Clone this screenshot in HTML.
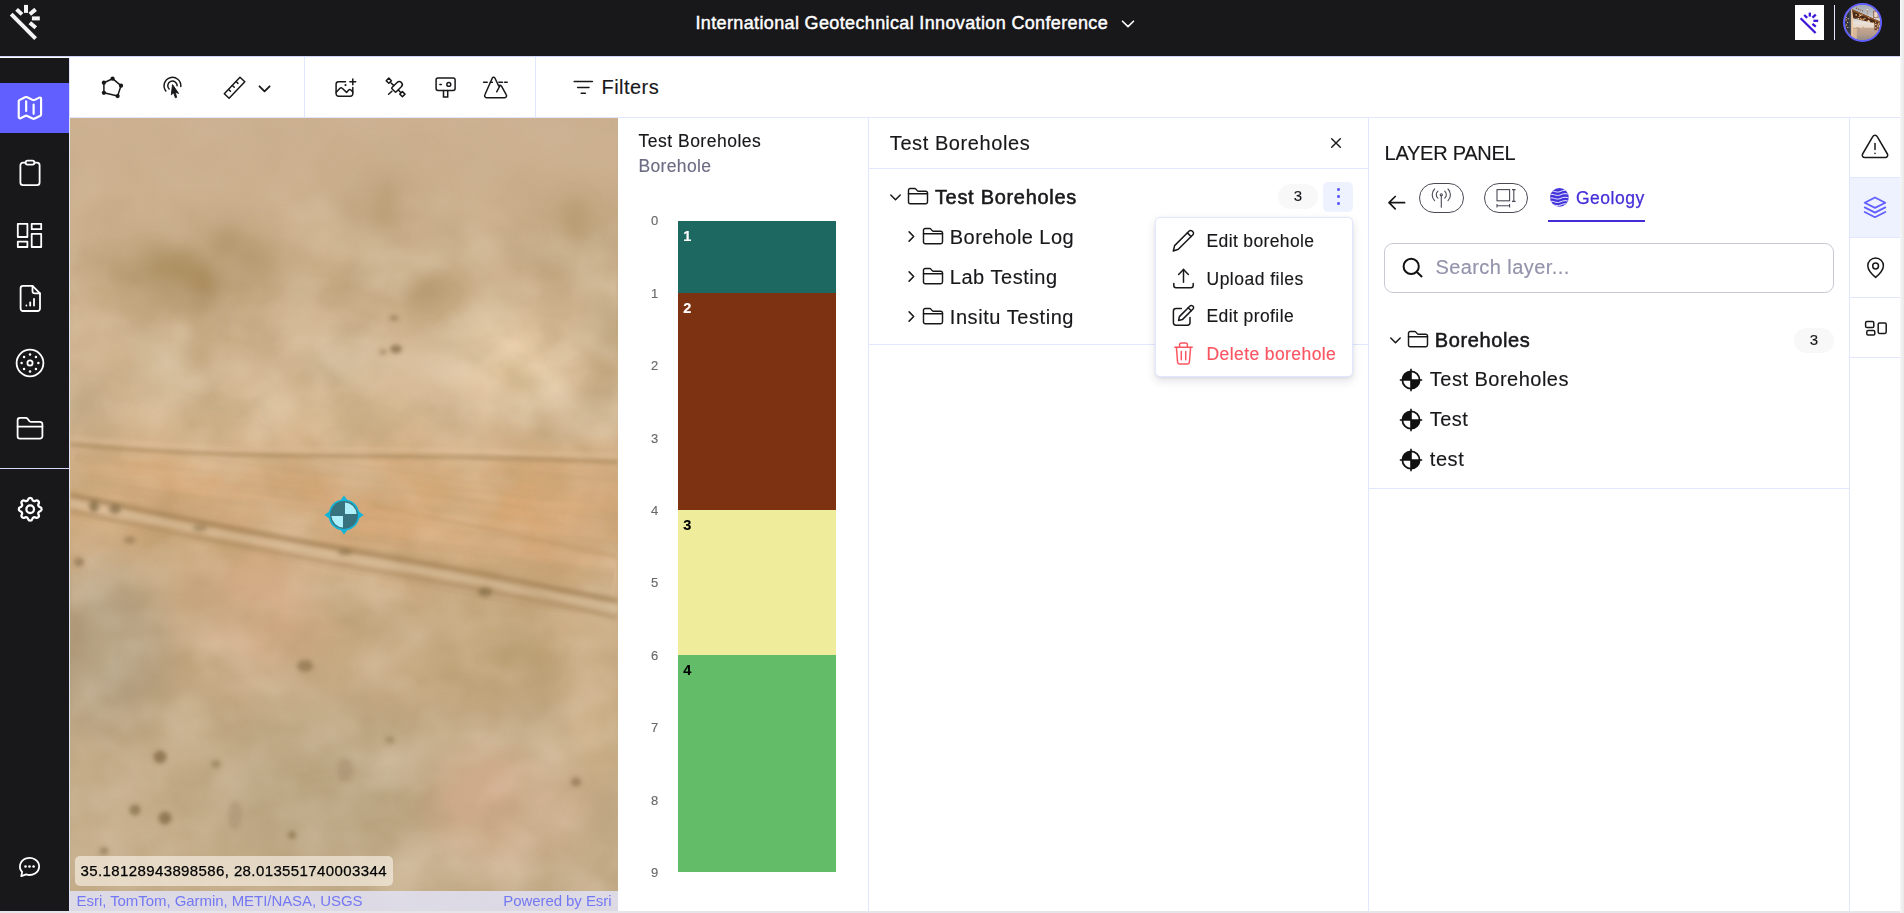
<!DOCTYPE html>
<html lang="en">
<head>
<meta charset="utf-8">
<title>International Geotechnical Innovation Conference</title>
<style>
*{box-sizing:border-box;margin:0;padding:0}
html,body{width:1904px;height:913px;overflow:hidden;background:#fff}
body{font-family:"Liberation Sans",Arial,sans-serif;color:#18181b;position:relative}
.abs{position:absolute}
svg{display:block;overflow:visible}
.ico{fill:none;stroke:#18181b;stroke-width:1.5;stroke-linecap:round;stroke-linejoin:round}
.icow{fill:none;stroke:#fff;stroke-width:1.8;stroke-linecap:round;stroke-linejoin:round}
.t{position:absolute;white-space:nowrap;line-height:1;-webkit-text-stroke:0.15px currentColor}
/* top bar */
#top{left:0;top:0;width:1900px;height:57px;background:#18181b;border-bottom:1px solid #cfd3fa}
#side{left:0;top:58px;width:70px;height:853px;background:#18181b;border-right:1px solid #dfe3fc}
#scroll{left:1900px;top:0;width:4px;height:913px;background:linear-gradient(90deg,#f6f6f6,#e9e9ea)}
#tool{left:0px;top:57px;width:1900px;height:61px;background:#fff;border-bottom:1px solid #e0e7ff}
.vsep{position:absolute;top:57px;width:1px;height:60px;background:#e0e7ff}
/* panels */
#strip{left:618px;top:118px;width:251px;height:793px;background:#fff;border-right:1px solid #e0e7ff}
#mid{left:869px;top:118px;width:500px;height:793px;background:#fff;border-right:1px solid #e0e7ff}
#right{left:1369px;top:118px;width:481px;height:793px;background:#fff;border-right:1px solid #e0e7ff}
#rail{left:1850px;top:118px;width:50px;height:793px;background:#fff}
#bottomline{left:0;top:911px;width:1900px;height:2px;background:#e6e6ea}
</style>
</head>
<body>
<!-- TOP BAR -->
<div id="top" class="abs"></div>
<div id="tool" class="abs"></div>
<div id="side" class="abs"></div>
<div class="vsep" style="left:304px"></div>
<div class="vsep" style="left:535px"></div>
<div id="scroll" class="abs"></div>


<!-- logo -->
<svg class="abs" style="left:0;top:0" width="69" height="57" viewBox="0 0 69 57">
 <g stroke="#f4f4f6" stroke-width="4" fill="none" stroke-linecap="butt">
  <line x1="11.2" y1="14.2" x2="35.6" y2="38.6"/>
  <line x1="26" y1="4.9" x2="26" y2="12.9"/>
  <line x1="31.9" y1="18.4" x2="39.8" y2="18.4"/>
  <line x1="29.8" y1="14.2" x2="35.6" y2="9.4"/>
  <line x1="16.6" y1="9.4" x2="22" y2="14.4"/>
  <line x1="29.8" y1="22.8" x2="35.8" y2="27.8"/>
 </g>
</svg>
<div class="t" id="title" style="left:695.5px;top:14.3px;font-size:18px;color:#fff;letter-spacing:0.36px;-webkit-text-stroke:0.45px #fff">International Geotechnical Innovation Conference</div>
<svg class="abs" style="left:1120px;top:17px" width="16" height="14" viewBox="0 0 16 14"><path d="M2.5 4.2 L8 9.6 L13.5 4.2" fill="none" stroke="#fff" stroke-width="1.6" stroke-linecap="round" stroke-linejoin="round"/></svg>
<!-- assistant button -->
<div class="abs" style="left:1795px;top:5px;width:29px;height:35px;background:#fff"></div>
<svg class="abs" style="left:1795px;top:5px" width="29" height="35" viewBox="0 0 29 35">
 <g stroke="#3d16d8" stroke-width="2.3" fill="none" stroke-linecap="butt">
  <line x1="5.6" y1="13.2" x2="20.6" y2="28"/>
  <line x1="14.8" y1="7.6" x2="14.8" y2="11.6"/>
  <line x1="18.4" y1="15.8" x2="23.2" y2="15.8"/>
  <line x1="17.4" y1="12.6" x2="20.8" y2="9.6"/>
  <line x1="9.2" y1="10" x2="12.2" y2="12.8"/>
  <line x1="17.4" y1="18.8" x2="20.8" y2="21.6"/>
 </g>
</svg>
<div class="abs" style="left:1834px;top:5px;width:1px;height:35px;background:#e4e6ff"></div>
<!-- avatar -->
<div class="abs" style="left:1842.8px;top:2.6px;width:39.6px;height:39.6px;border-radius:50%;border:2.1px solid #615fff;overflow:hidden;background:#c9a78a">
 <svg width="35.4" height="35.4" viewBox="0 0 35.4 35.4">
  <defs><linearGradient id="avg" x1="0" y1="0" x2="0" y2="1"><stop offset="0" stop-color="#a3a9b5"/><stop offset="0.3" stop-color="#c3c3c6"/><stop offset="0.5" stop-color="#e9e1d9"/><stop offset="0.63" stop-color="#ead9c6"/><stop offset="0.65" stop-color="#c6a892"/><stop offset="0.85" stop-color="#b39a8a"/><stop offset="1" stop-color="#8f8b86"/></linearGradient></defs>
  <rect width="35.4" height="35.4" fill="url(#avg)"/>
  <rect x="0" y="0" width="6.2" height="35.4" fill="#2e3340"/>
  <rect x="4.6" y="4" width="1.6" height="31" fill="#4a5060"/>
  <rect x="6.2" y="4.2" width="2" height="31.2" fill="#ecc9a0"/>
  <rect x="8.2" y="24" width="3.6" height="11.4" fill="#e2c09c" opacity="0.8"/>
  <polygon points="7,4.3 35.4,16.8 35.4,20.4 29.6,18.3 8.3,13.2" fill="#4b2a18"/>
  <polygon points="7,4.3 35.4,16.8 35.4,18 7,6" fill="#8a5228"/>
  <rect x="28.6" y="6.2" width="4.6" height="6.4" fill="#d9b9a8" stroke="#8a5a44" stroke-width="0.7"/>
  <rect x="29.8" y="7.6" width="2.2" height="4.6" fill="#e8d6cc"/>
  <rect x="29.4" y="17.8" width="4.4" height="7.4" fill="#6e4128"/>
  <rect x="30.2" y="19" width="1.2" height="1.2" fill="#f3d4ae"/><rect x="32" y="20.6" width="1.2" height="1.2" fill="#f3d4ae"/><rect x="30.2" y="22.2" width="1.2" height="1.2" fill="#f3d4ae"/><rect x="32" y="23.6" width="1.2" height="1.2" fill="#e9c79e"/>
  <rect x="22.2" y="5.6" width="0.7" height="4" fill="#b08a70"/>
  <rect x="11" y="22" width="2" height="2" fill="#c9a890"/><rect x="17.6" y="21.6" width="1.6" height="2.4" fill="#c9a890"/><rect x="13.4" y="22.4" width="1" height="5" fill="#b4947f"/>
  <circle cx="14.2" cy="11.5" r="0.7" fill="#e89b5a"/><circle cx="24.3" cy="13.1" r="0.55" fill="#e89b5a"/><circle cx="14.7" cy="9.9" r="0.8" fill="#e89b5a"/><circle cx="18.3" cy="14.6" r="0.6" fill="#f2b877"/><circle cx="30.6" cy="17.3" r="0.55" fill="#f7d6a6"/><circle cx="12.1" cy="13.2" r="0.55" fill="#ffe6c4"/><circle cx="28.3" cy="17.6" r="0.7" fill="#e89b5a"/><circle cx="23.5" cy="16.5" r="0.8" fill="#e89b5a"/><circle cx="18.3" cy="14.2" r="0.8" fill="#f2b877"/><circle cx="30.9" cy="16.0" r="0.6" fill="#e89b5a"/><circle cx="13.6" cy="13.7" r="0.8" fill="#ffe6c4"/><circle cx="18.9" cy="14.6" r="0.7" fill="#e89b5a"/><circle cx="23.2" cy="16.3" r="0.55" fill="#ffe6c4"/><circle cx="33.8" cy="18.9" r="0.6" fill="#ffe6c4"/><circle cx="33.1" cy="19.4" r="0.55" fill="#f2b877"/><circle cx="24.5" cy="17.0" r="0.7" fill="#ffe6c4"/><circle cx="11.2" cy="10.0" r="0.8" fill="#f7d6a6"/><circle cx="16.9" cy="9.9" r="0.6" fill="#f7d6a6"/><circle cx="15.6" cy="13.2" r="0.55" fill="#f7d6a6"/><circle cx="23.7" cy="15.8" r="0.8" fill="#ffe6c4"/><circle cx="22.3" cy="16.1" r="0.7" fill="#f2b877"/><circle cx="34.0" cy="17.9" r="0.55" fill="#f7d6a6"/><circle cx="23.6" cy="12.6" r="0.6" fill="#e89b5a"/><circle cx="15.6" cy="10.4" r="0.55" fill="#ffe6c4"/><circle cx="16.2" cy="14.4" r="0.8" fill="#e89b5a"/><circle cx="20.0" cy="13.4" r="0.55" fill="#ffe6c4"/><circle cx="1.2" cy="15" r="0.7" fill="#f0b06c"/><circle cx="2.6" cy="17.5" r="0.7" fill="#f0b06c"/><circle cx="1.4" cy="20" r="0.7" fill="#f0b06c"/><circle cx="2.8" cy="22.4" r="0.7" fill="#f0b06c"/><circle cx="1.2" cy="12.4" r="0.7" fill="#f0b06c"/><circle cx="3.2" cy="13.8" r="0.7" fill="#f0b06c"/><circle cx="11.5" cy="3.2" r="0.6" fill="#7a4a24"/><circle cx="13.6" cy="4.2" r="0.6" fill="#7a4a24"/><circle cx="15.6" cy="5" r="0.6" fill="#7a4a24"/><circle cx="17.6" cy="5.8" r="0.6" fill="#7a4a24"/><circle cx="22.4" cy="5" r="0.6" fill="#7a4a24"/><circle cx="22.4" cy="4.8" r="0.8" fill="#ffe9c8"/>
 </svg>
</div>
<!-- sidebar -->
<div class="abs" style="left:0;top:83px;width:69px;height:50px;background:#615fff"></div>
<svg class="abs" style="left:15px;top:93px" width="29.8" height="29.8" viewBox="0 0 24 24"><g fill="none" stroke="#fff" stroke-width="1.75" stroke-linecap="round" stroke-linejoin="round">
 <path d="M14.106 5.553a2 2 0 0 0 1.788 0l3.659-1.83A1 1 0 0 1 21 4.619v12.764a1 1 0 0 1-.553.894l-4.553 2.277a2 2 0 0 1-1.788 0l-4.212-2.106a2 2 0 0 0-1.788 0l-3.659 1.83A1 1 0 0 1 3 19.381V6.618a1 1 0 0 1 .553-.894l4.553-2.277a2 2 0 0 1 1.788 0z"/><path d="M15 9.4v7.4"/><path d="M9 6.8v7.6"/></g></svg>
<!-- clipboard -->
<svg class="abs" style="left:16px;top:159px" width="28" height="28" viewBox="0 0 28 28"><g class="icow">
 <path d="M9.5 3.6 H7 a2.6 2.6 0 0 0 -2.6 2.6 V23.6 a2.6 2.6 0 0 0 2.6 2.6 H21 a2.6 2.6 0 0 0 2.6 -2.6 V6.2 a2.6 2.6 0 0 0 -2.6 -2.6 H18.5"/>
 <rect x="9.5" y="1.6" width="9" height="4" rx="2"/></g></svg>
<!-- dashboard -->
<svg class="abs" style="left:16px;top:221px" width="28" height="28" viewBox="0 0 28 28"><g class="icow" stroke-linejoin="miter">
 <rect x="1.8" y="2.8" width="9.6" height="13.2"/><rect x="15.7" y="2.8" width="9.5" height="5.4"/><rect x="15.7" y="12.8" width="9.5" height="13.2"/><rect x="1.8" y="20.6" width="9.6" height="5.4"/></g></svg>
<!-- file chart -->
<svg class="abs" style="left:16px;top:284px" width="28" height="28" viewBox="0 0 28 28"><g class="icow">
 <path d="M16.5 1.8 H7 a2.4 2.4 0 0 0 -2.4 2.4 V24.6 a2.4 2.4 0 0 0 2.4 2.4 H21.6 a2.4 2.4 0 0 0 2.4 -2.4 V9.4 Z"/><path d="M16.5 1.8 V7 a2.4 2.4 0 0 0 2.4 2.4 H24"/>
 <line x1="10.4" y1="21.4" x2="10.4" y2="21.6"/><line x1="14.2" y1="18.4" x2="14.2" y2="21.6"/><line x1="18" y1="14.8" x2="18" y2="21.6"/></g></svg>
<!-- wheel -->
<svg class="abs" style="left:15px;top:348px" width="30" height="30" viewBox="0 0 30 30"><g class="icow" stroke-width="1.8">
 <circle cx="15" cy="15" r="13.4"/><circle cx="15" cy="15" r="2.6"/></g>
 <g fill="#fff"><circle cx="15" cy="6.6" r="1.25"/><circle cx="15" cy="23.4" r="1.25"/><circle cx="6.6" cy="15" r="1.25"/><circle cx="23.4" cy="15" r="1.25"/><circle cx="9.06" cy="9.06" r="1.25"/><circle cx="20.94" cy="9.06" r="1.25"/><circle cx="9.06" cy="20.94" r="1.25"/><circle cx="20.94" cy="20.94" r="1.25"/></g></svg>
<!-- folder -->
<svg class="abs" style="left:16px;top:414px" width="28" height="28" viewBox="0 0 28 28"><g class="icow">
 <path d="M1.6 22.2 V6.2 a2.4 2.4 0 0 1 2.4 -2.4 H9.6 a2.4 2.4 0 0 1 2 1 L13 6.8 a2.4 2.4 0 0 0 2 1 H24 a2.4 2.4 0 0 1 2.4 2.4 V22.2 a2.4 2.4 0 0 1 -2.4 2.4 H4 a2.4 2.4 0 0 1 -2.4 -2.4 Z"/><line x1="1.6" y1="12.6" x2="26.4" y2="12.6"/></g></svg>
<div class="abs" style="left:0;top:468px;width:69px;height:1px;background:#d3d7fa"></div>
<!-- settings -->
<svg class="abs" style="left:15px;top:493.7px" width="30.4" height="30.4" viewBox="0 0 24 24"><g class="icow" stroke-width="1.5">
 <path d="M10.325 4.317c.426 -1.756 2.924 -1.756 3.35 0a1.724 1.724 0 0 0 2.573 1.066c1.543 -.94 3.31 .826 2.37 2.37a1.724 1.724 0 0 0 1.065 2.572c1.756 .426 1.756 2.924 0 3.35a1.724 1.724 0 0 0 -1.066 2.573c.94 1.543 -.826 3.31 -2.37 2.37a1.724 1.724 0 0 0 -2.572 1.065c-.426 1.756 -2.924 1.756 -3.35 0a1.724 1.724 0 0 0 -2.573 -1.066c-1.543 .94 -3.31 -.826 -2.37 -2.37a1.724 1.724 0 0 0 -1.065 -2.572c-1.756 -.426 -1.756 -2.924 0 -3.35a1.724 1.724 0 0 0 1.066 -2.573c-.94 -1.543 .826 -3.31 2.37 -2.37c1 .608 2.296 .07 2.572 -1.065z"/><circle cx="12" cy="12" r="3"/></g></svg>
<!-- chat -->
<svg class="abs" style="left:17px;top:855px" width="26" height="24" viewBox="0 0 26 24"><g class="icow" stroke-width="1.7">
 <path d="M9.2 19.4 A9.6 8.5 0 1 0 5.15 16.86 L4.3 21.2 Z"/></g>
 <g fill="#fff"><circle cx="8.5" cy="11.5" r="1.3"/><circle cx="12.5" cy="11.5" r="1.3"/><circle cx="16.6" cy="11.5" r="1.3"/></g></svg>
<!-- toolbar icons -->
<!-- polygon -->
<svg class="abs" style="left:100px;top:75px" width="26" height="26" viewBox="0 0 26 26"><g class="ico" stroke-width="1.8">
 <path d="M12.6 3.7 L21 10.7 L17.6 21.1 L3.9 17.8 L3.9 7.7 Z"/></g>
 <g fill="#18181b"><circle cx="12.6" cy="3.7" r="2.15"/><circle cx="21" cy="10.7" r="2.15"/><circle cx="17.6" cy="21.1" r="2.15"/><circle cx="3.9" cy="17.8" r="2.15"/><circle cx="3.9" cy="7.7" r="2.15"/></g></svg>
<!-- pointer tap -->
<svg class="abs" style="left:160px;top:74px" width="26" height="26" viewBox="0 0 26 26"><g class="ico" stroke-width="1.75">
 <path d="M5.83 16.92 A8.4 8.4 0 1 1 20.82 12.48"/><path d="M9.13 15.07 A4.7 4.7 0 1 1 17.15 11.75"/></g>
 <path d="M12.5 10.6 L11.3 20.8 L13.6 18.7 L15.4 23.8 L16.7 23.3 L15.2 18.2 L18.6 19.4 Z" fill="#18181b" stroke="#18181b" stroke-width="0.9" stroke-linejoin="round"/></svg>
<!-- ruler -->
<svg class="abs" style="left:221px;top:74px" width="28" height="28" viewBox="0 0 28 28"><g class="ico" stroke-width="1.9" stroke-linejoin="miter">
 <path d="M3.3 19.8 L19 3.2 L23.8 7.7 L8.1 24.3 Z"/></g><g class="ico" stroke-width="1.4" stroke-linecap="butt"><path d="M7.6 15.45 l1.9 1.8"/><path d="M11.35 11.5 l1.9 1.8"/><path d="M15.1 7.55 l1.9 1.8"/></g></svg>
<svg class="abs" style="left:256px;top:81px" width="18" height="14" viewBox="0 0 18 14"><path d="M3.5 5.3 L8.55 10.3 L13.6 5.3" fill="none" stroke="#18181b" stroke-width="1.8" stroke-linecap="round" stroke-linejoin="round"/></svg>
<!-- image plus -->
<svg class="abs" style="left:332px;top:75px" width="26" height="26" viewBox="0 0 26 26"><g class="ico" stroke-width="1.8">
 <path d="M13.5 6.8 H6.5 a2.4 2.4 0 0 0 -2.4 2.4 V18.8 a2.4 2.4 0 0 0 2.4 2.4 H18.4 a2.4 2.4 0 0 0 2.4 -2.4 V12.5"/>
 <path d="M4.2 17.2 L8 13.2 a1.5 1.5 0 0 1 2.2 0 L14.6 17.4 L16.7 15 a1.5 1.5 0 0 1 2.2 0 L20.8 17"/>
 <path d="M20.8 3.9 V9.7 M17.9 6.8 H23.7"/></g><circle cx="13.5" cy="10.1" r="1.05" fill="#18181b"/></svg>
<!-- satellite -->
<svg class="abs" style="left:383px;top:75px" width="26" height="26" viewBox="0 0 26 26"><g class="ico" stroke-width="1.8" stroke-linejoin="miter">
 <path d="M5.8 3.1 L8.4 5.7 L5.8 8.3 L3.2 5.7 Z"/>
 <path d="M19.4 16.5 L22 19.1 L19.4 21.7 L16.8 19.1 Z"/>
 <path d="M7.8 7.7 L10.6 10.4"/><path d="M15.6 15.4 L17.8 17.5"/>
 <path d="M8.9 16.2 L5.6 19.2"/></g>
 <g class="ico" stroke-width="1.8"><path d="M-5.4 -2.1 a0.9 0.9 0 0 1 0.9 -0.9 H2.7 a3 3 0 0 1 0 6 H-4.5 a0.9 0.9 0 0 1 -0.9 -0.9 Z" transform="translate(14.3 11.5) rotate(-45)"/></g></svg>
<!-- billboard camera -->
<svg class="abs" style="left:433px;top:75px" width="26" height="26" viewBox="0 0 26 26"><g class="ico" stroke-width="1.8">
 <rect x="3.1" y="2.9" width="19" height="12.6" rx="1.9"/><path d="M10.5 15.6 V21.9 H14.7 V15.6" stroke-linejoin="miter"/><circle cx="15.8" cy="9.4" r="1.95"/><path d="M6.9 9.4 H8.3"/></g></svg>
<!-- mountain -->
<svg class="abs" style="left:482px;top:74px" width="28" height="28" viewBox="0 0 28 28"><g class="ico" stroke-width="1.8">
 <path d="M10.3 4 a1.5 1.5 0 0 1 2.6 0 L16.7 12 Q18 10.4 19.5 12.2 L24.3 20.8 a1.9 1.9 0 0 1 -1.6 2.9 H4.5 A1.9 1.9 0 0 1 2.9 20.8 Z"/>
 <path d="M17.8 12 L14.7 17.8"/></g>
 <g class="ico" stroke-width="1.5" stroke-linecap="butt"><path d="M1.6 8.3 H5.2"/><path d="M8.4 8.3 H10.4"/><path d="M16.9 8.3 H20.5"/><path d="M22.6 8.3 H25.2"/></g></svg>
<!-- filters -->
<svg class="abs" style="left:572px;top:78px" width="22" height="18" viewBox="0 0 22 18"><g class="ico" stroke-width="1.5"><path d="M2.2 3.6 H20.4"/><path d="M5.6 9.4 H17"/><path d="M9.2 15.2 H13.4"/></g></svg>
<div class="t" id="filters" style="left:601.5px;top:77px;font-size:20px;letter-spacing:0.45px">Filters</div>
<!-- MAP -->
<div id="map" class="abs" style="left:70px;top:118px;width:548px;height:793px;background:#cdb18c;overflow:hidden"><svg width="548" height="793" viewBox="70 118 548 793" preserveAspectRatio="none">
<defs>
 <linearGradient id="mbase" x1="0" y1="0" x2="0" y2="1">
  <stop offset="0" stop-color="#ccb191"/><stop offset="0.18" stop-color="#cbaf8b"/><stop offset="0.36" stop-color="#d5b995"/><stop offset="0.44" stop-color="#d3b086"/><stop offset="0.52" stop-color="#d0a97c"/><stop offset="0.6" stop-color="#c9a980"/><stop offset="0.78" stop-color="#c4ab87"/><stop offset="1" stop-color="#c6ae8c"/>
 </linearGradient>
 <filter id="b30" x="-50%" y="-50%" width="200%" height="200%"><feGaussianBlur stdDeviation="22"/></filter>
 <filter id="b14" x="-50%" y="-50%" width="200%" height="200%"><feGaussianBlur stdDeviation="10"/></filter>
 <filter id="b6" x="-50%" y="-50%" width="200%" height="200%"><feGaussianBlur stdDeviation="5"/></filter>
 <filter id="b3" x="-50%" y="-50%" width="200%" height="200%"><feGaussianBlur stdDeviation="2.2"/></filter>
 <filter id="noiseD" x="0" y="0" width="100%" height="100%"><feTurbulence type="fractalNoise" baseFrequency="0.016 0.02" numOctaves="4" seed="7"/><feColorMatrix type="matrix" values="0 0 0 0 0.40  0 0 0 0 0.29  0 0 0 0 0.14  1.5 1.2 0 0 -1.05"/><feGaussianBlur stdDeviation="1.6"/></filter>
 <filter id="noiseL" x="0" y="0" width="100%" height="100%"><feTurbulence type="fractalNoise" baseFrequency="0.014 0.018" numOctaves="3" seed="23"/><feColorMatrix type="matrix" values="0 0 0 0 0.95  0 0 0 0 0.84  0 0 0 0 0.70  0 1.4 1.2 0 -1.02"/><feGaussianBlur stdDeviation="2"/></filter>
 <filter id="noiseS" x="0" y="0" width="100%" height="100%"><feTurbulence type="fractalNoise" baseFrequency="0.004 0.09" numOctaves="2" seed="4"/><feColorMatrix type="matrix" values="0 0 0 0 0.45  0 0 0 0 0.30  0 0 0 0 0.14  1.6 0 0 0 -0.62"/></filter>
 <linearGradient id="nmg" x1="0" y1="0" x2="0" y2="1"><stop offset="0" stop-color="#fff" stop-opacity="0.15"/><stop offset="0.09" stop-color="#fff" stop-opacity="0.25"/><stop offset="0.2" stop-color="#fff" stop-opacity="1"/><stop offset="1" stop-color="#fff" stop-opacity="0.8"/></linearGradient><mask id="nmask"><rect x="70" y="118" width="548" height="793" fill="url(#nmg)"/></mask><clipPath id="roadclip"><path d="M70 440 L618 458 L618 625 L70 520 Z"/></clipPath>
</defs>
<rect x="70" y="118" width="548" height="793" fill="url(#mbase)"/>
<!-- broad tones -->
<g filter="url(#b30)">
 <ellipse cx="195" cy="272" rx="95" ry="32" fill="#b0946a" opacity="0.7"/>
 <ellipse cx="195" cy="355" rx="22" ry="60" fill="#b99b6e" opacity="0.5"/>
 <ellipse cx="385" cy="220" rx="30" ry="55" fill="#b79b72" opacity="0.55"/>
 <ellipse cx="445" cy="290" rx="50" ry="30" fill="#bb9f74" opacity="0.5"/>
 <ellipse cx="585" cy="235" rx="40" ry="45" fill="#b79c72" opacity="0.55"/>
 <ellipse cx="608" cy="335" rx="22" ry="50" fill="#b2996c" opacity="0.55"/>
 <ellipse cx="515" cy="360" rx="60" ry="42" fill="#f0d6b2" opacity="0.85"/>
 <ellipse cx="330" cy="258" rx="30" ry="20" fill="#e2c8a2" opacity="0.6"/>
 <ellipse cx="135" cy="385" rx="45" ry="40" fill="#dcc09a" opacity="0.6"/><ellipse cx="85" cy="410" rx="30" ry="50" fill="#bfa988" opacity="0.6"/>
 <ellipse cx="330" cy="410" rx="110" ry="30" fill="#d9bb94" opacity="0.55"/>
 <!-- road orange band -->
 <path d="M70 456 L618 466 L618 575 L70 495 Z" fill="#dcab7a" opacity="0.8"/>
 <ellipse cx="480" cy="492" rx="110" ry="20" fill="#d9a46c" opacity="0.55"/>
 <ellipse cx="150" cy="472" rx="80" ry="14" fill="#c9995f" opacity="0.45"/>
 <!-- lower area -->
 <ellipse cx="255" cy="615" rx="60" ry="55" fill="#dcae8c" opacity="0.65"/>
 <ellipse cx="105" cy="650" rx="62" ry="85" fill="#ab987a" opacity="0.9"/>
 <ellipse cx="330" cy="800" rx="120" ry="75" fill="#b5a27f" opacity="0.7"/>
 <ellipse cx="480" cy="650" rx="90" ry="45" fill="#bd9f70" opacity="0.6"/>
 <ellipse cx="500" cy="805" rx="75" ry="55" fill="#d2ab8c" opacity="0.8"/>
 <ellipse cx="130" cy="790" rx="55" ry="70" fill="#c6ae8c" opacity="0.6"/>
 <ellipse cx="595" cy="640" rx="35" ry="55" fill="#d6b38a" opacity="0.5"/>
 <ellipse cx="595" cy="740" rx="30" ry="40" fill="#d9bb90" opacity="0.6"/>
</g>
<g mask="url(#nmask)"><rect x="70" y="118" width="548" height="793" filter="url(#noiseD)" opacity="0.42"/>
<rect x="70" y="118" width="548" height="793" filter="url(#noiseL)" opacity="0.34"/></g>
<g clip-path="url(#roadclip)"><rect x="70" y="430" width="548" height="200" filter="url(#noiseS)" opacity="0.35" transform="rotate(7 344 520)"/></g>
<g filter="url(#b14)">
 <ellipse cx="165" cy="268" rx="36" ry="14" fill="#a88a58" opacity="0.7"/><ellipse cx="199" cy="335" rx="8" ry="45" fill="#ae9060" opacity="0.5"/>
 <ellipse cx="203" cy="280" rx="16" ry="12" fill="#a07f4c" opacity="0.7"/>
 <ellipse cx="228" cy="240" rx="12" ry="16" fill="#a78a5e" opacity="0.6"/><ellipse cx="178" cy="300" rx="40" ry="12" fill="#a88a60" opacity="0.45"/><ellipse cx="258" cy="262" rx="14" ry="22" fill="#ad9064" opacity="0.4"/>
 <ellipse cx="292" cy="254" rx="12" ry="8" fill="#ac8f62" opacity="0.45"/>
 <ellipse cx="385" cy="205" rx="9" ry="26" fill="#a98c5e" opacity="0.55"/>
 <ellipse cx="575" cy="222" rx="11" ry="20" fill="#a58a5a" opacity="0.55"/>
 <ellipse cx="610" cy="330" rx="8" ry="26" fill="#a58a5c" opacity="0.5"/>
 <ellipse cx="430" cy="290" rx="26" ry="10" fill="#ac8f62" opacity="0.5"/>
 <ellipse cx="520" cy="382" rx="20" ry="9" fill="#b59866" opacity="0.45"/>
 <ellipse cx="520" cy="655" rx="30" ry="12" fill="#ad9062" opacity="0.4"/>
</g>
<!-- road lines -->
<g filter="url(#b3)" fill="none">
 <path d="M70 444 C150 452 250 456 340 456 S520 458 618 462" stroke="#9b7a4c" stroke-width="2.6" opacity="0.75"/>
 <path d="M70 438 C150 446 250 450 340 450 S520 452 618 456" stroke="#e3c59f" stroke-width="4" opacity="0.4"/>
 <path d="M70 503 C160 522 300 550 400 567 S560 598 618 609" stroke="#d8c3a2" stroke-width="5" opacity="0.6"/>
 <path d="M70 495 C160 514 300 542 400 559 S560 590 618 601" stroke="#9c7b4e" stroke-width="5.5" opacity="0.6"/>
 <path d="M70 511 C160 530 300 558 400 575 S560 606 618 617" stroke="#a3845a" stroke-width="4" opacity="0.5"/>
 <path d="M373 506 C460 522 540 540 618 557" stroke="#b88e5c" stroke-width="3" opacity="0.45"/>
 <path d="M430 560 C500 580 560 600 618 622" stroke="#b9966a" stroke-width="2.5" opacity="0.35"/>
</g>
<!-- bushes / dark dots -->
<g filter="url(#b3)" fill="#7d6540">
 <ellipse cx="394" cy="318" rx="4.5" ry="3" opacity="0.5"/><ellipse cx="396" cy="349" rx="6" ry="4.2" opacity="0.7"/><ellipse cx="383" cy="352" rx="4" ry="3" opacity="0.4"/>
 <ellipse cx="94" cy="506" rx="5" ry="6" opacity="0.7"/><ellipse cx="115" cy="509" rx="6" ry="5" opacity="0.65"/><ellipse cx="200" cy="528" rx="7" ry="3.5" opacity="0.45"/><ellipse cx="345" cy="552" rx="7" ry="3.5" opacity="0.45"/>
 <ellipse cx="79" cy="562" rx="5" ry="4.5" opacity="0.55"/><ellipse cx="130" cy="540" rx="6" ry="4" opacity="0.45"/>
 <ellipse cx="305" cy="666" rx="8" ry="6" opacity="0.55"/><ellipse cx="485" cy="592" rx="7" ry="4.5" opacity="0.6"/>
 <ellipse cx="160" cy="757" rx="6.5" ry="6.5" opacity="0.7"/><ellipse cx="135" cy="810" rx="5.5" ry="5.5" opacity="0.65"/><ellipse cx="165" cy="818" rx="6.5" ry="6.5" opacity="0.7"/>
 <ellipse cx="216" cy="764" rx="5" ry="4" opacity="0.45"/><ellipse cx="104" cy="851" rx="4.5" ry="4" opacity="0.5"/><ellipse cx="292" cy="835" rx="4" ry="4" opacity="0.55"/>
 <ellipse cx="576" cy="782" rx="5" ry="4.5" opacity="0.55"/><ellipse cx="390" cy="740" rx="5" ry="4" opacity="0.35"/><ellipse cx="345" cy="770" rx="8" ry="12" opacity="0.2"/><ellipse cx="235" cy="815" rx="7" ry="14" opacity="0.2"/>
</g>
</svg></div>

<!-- map overlays -->
<svg class="abs" style="left:322px;top:493.4px" width="44" height="44" viewBox="-22 -22 44 44">
 <path d="M0 -19.6 L3.2 -15.2 A16 16 0 0 1 15.2 -3.2 L19.6 0 L15.2 3.2 A16 16 0 0 1 3.2 15.2 L0 19.6 L-3.2 15.2 A16 16 0 0 1 -15.2 3.2 L-19.6 0 L-15.2 -3.2 A16 16 0 0 1 -3.2 -15.2 Z" fill="#14b4d8"/>
 <circle cx="0" cy="0" r="13.9" fill="#36737f"/>
 <path d="M1 -1 V-12.6 A12.6 12.6 0 0 1 12.6 -1 Z" fill="#aef0fb"/>
 <path d="M-1 1 V12.6 A12.6 12.6 0 0 1 -12.6 1 Z" fill="#aef0fb"/>
</svg>
<div class="abs" style="left:75px;top:856px;width:318px;height:30px;border-radius:5px;background:rgba(246,240,228,0.66)"></div>
<div class="t" id="coord" style="left:80.5px;top:863.2px;font-size:15px;letter-spacing:0.39px;color:#000;-webkit-text-stroke:0.25px #000">35.18128943898586, 28.013551740003344</div>
<div class="abs" style="left:70px;top:891px;width:548px;height:20px;background:rgba(225,226,245,0.85)"></div>
<div class="t" id="attr1" style="left:76.6px;top:893px;font-size:15px;letter-spacing:-0.06px;color:#7478f3;-webkit-text-stroke:0">Esri, TomTom, Garmin, METI/NASA, USGS</div>
<div class="t" id="attr2" style="left:503.2px;top:893px;font-size:15px;letter-spacing:-0.06px;color:#7478f3;-webkit-text-stroke:0">Powered by Esri</div>
<!-- PANELS -->
<div id="strip" class="abs"></div>
<div id="mid" class="abs"></div>
<div id="right" class="abs"></div>
<div id="rail" class="abs"></div>
<!-- strip content -->
<div class="t" id="st1" style="left:638.5px;top:132.5px;font-size:17.5px;letter-spacing:0.5px">Test Boreholes</div>
<div class="t" id="st2" style="left:638.5px;top:157.5px;font-size:17.5px;letter-spacing:0.35px;color:#6c6c84">Borehole</div>
<div class="abs" style="left:678px;top:220.5px;width:157.5px;height:72.4px;background:#1e6862"></div>
<div class="t" style="left:683.2px;top:228.7px;font-size:14.5px;font-weight:700;color:#fff">1</div>
<div class="abs" style="left:678px;top:292.9px;width:157.5px;height:217.2px;background:#7d3212"></div>
<div class="t" style="left:683.2px;top:301.1px;font-size:14.5px;font-weight:700;color:#fff">2</div>
<div class="abs" style="left:678px;top:510.1px;width:157.5px;height:144.8px;background:#efed9b"></div>
<div class="t" style="left:683.2px;top:518.3px;font-size:14.5px;font-weight:700;color:#000">3</div>
<div class="abs" style="left:678px;top:654.8px;width:157.5px;height:217.2px;background:#63bd68"></div>
<div class="t" style="left:683.2px;top:663.0px;font-size:14.5px;font-weight:700;color:#000">4</div>
<div class="t ax" style="left:639.2px;width:19px;text-align:right;top:214.4px;font-size:13px;color:#6a6a6a">0</div>
<div class="t ax" style="left:639.2px;width:19px;text-align:right;top:286.8px;font-size:13px;color:#6a6a6a">1</div>
<div class="t ax" style="left:639.2px;width:19px;text-align:right;top:359.2px;font-size:13px;color:#6a6a6a">2</div>
<div class="t ax" style="left:639.2px;width:19px;text-align:right;top:431.6px;font-size:13px;color:#6a6a6a">3</div>
<div class="t ax" style="left:639.2px;width:19px;text-align:right;top:504.0px;font-size:13px;color:#6a6a6a">4</div>
<div class="t ax" style="left:639.2px;width:19px;text-align:right;top:576.3px;font-size:13px;color:#6a6a6a">5</div>
<div class="t ax" style="left:639.2px;width:19px;text-align:right;top:648.7px;font-size:13px;color:#6a6a6a">6</div>
<div class="t ax" style="left:639.2px;width:19px;text-align:right;top:721.1px;font-size:13px;color:#6a6a6a">7</div>
<div class="t ax" style="left:639.2px;width:19px;text-align:right;top:793.5px;font-size:13px;color:#6a6a6a">8</div>
<div class="t ax" style="left:639.2px;width:19px;text-align:right;top:865.9px;font-size:13px;color:#6a6a6a">9</div>
<!-- middle panel -->
<div class="t" id="mh" style="left:889.8px;top:133px;font-size:20px;letter-spacing:0.58px">Test Boreholes</div>
<svg class="abs" style="left:1329px;top:136px" width="14" height="14" viewBox="0 0 14 14"><path d="M2.7 2.7 L11.3 11.3 M11.3 2.7 L2.7 11.3" fill="none" stroke="#18181b" stroke-width="1.4" stroke-linecap="round"/></svg>
<div class="abs" style="left:869px;top:168px;width:499px;height:1px;background:#e0e7ff"></div>
<div class="abs" style="left:869px;top:344px;width:499px;height:1px;background:#e0e7ff"></div>
<svg class="abs" style="left:889px;top:192.6px" width="13" height="9" viewBox="0 0 13 9"><path d="M1.8 2 L6.5 6.7 L11.2 2" fill="none" stroke="#18181b" stroke-width="1.5" stroke-linecap="round" stroke-linejoin="round"/></svg>
<svg class="abs" style="left:907.3px;top:187px" width="22" height="18" viewBox="0 0 22 18"><g fill="none" stroke="#18181b" stroke-width="1.45" stroke-linejoin="round" stroke-linecap="round"><path d="M1.5 15 V3.2 a1.7 1.7 0 0 1 1.7 -1.7 H7.6 a1.7 1.7 0 0 1 1.3 0.6 L10.2 3.6 a1.7 1.7 0 0 0 1.3 0.6 H18.8 a1.7 1.7 0 0 1 1.7 1.7 V15 a1.7 1.7 0 0 1 -1.7 1.7 H3.2 A1.7 1.7 0 0 1 1.5 15 Z"/><path d="M1.5 6.8 H20.5"/></g></svg>
<div class="t" id="mroot" style="left:934.9px;top:186.5px;font-size:20px;font-weight:400;letter-spacing:0.7px;-webkit-text-stroke:0.55px currentColor">Test Boreholes</div>
<div class="abs" style="left:1278px;top:184px;width:40px;height:25px;border-radius:13px;background:#f8f8f9"></div>
<div class="t" style="left:1278px;width:40px;text-align:center;top:188.3px;font-size:15px">3</div>
<div class="abs" style="left:1323px;top:182px;width:30px;height:30px;border-radius:5px;background:#eef2ff"></div>
<div class="abs" style="left:1336.9px;top:187.9px;width:3.4px;height:3.4px;border-radius:1.2px;background:#615fff"></div>
<div class="abs" style="left:1336.9px;top:194.8px;width:3.4px;height:3.4px;border-radius:1.2px;background:#615fff"></div>
<div class="abs" style="left:1336.9px;top:201.7px;width:3.4px;height:3.4px;border-radius:1.2px;background:#615fff"></div>
<svg class="abs" style="left:906.5px;top:229.9px" width="9" height="13" viewBox="0 0 9 13"><path d="M2.1 1.9 L6.7 6.5 L2.1 11.1" fill="none" stroke="#18181b" stroke-width="1.5" stroke-linecap="round" stroke-linejoin="round"/></svg>
<svg class="abs" style="left:922px;top:227.0px" width="22" height="18" viewBox="0 0 22 18"><g fill="none" stroke="#18181b" stroke-width="1.45" stroke-linejoin="round" stroke-linecap="round"><path d="M1.5 15 V3.2 a1.7 1.7 0 0 1 1.7 -1.7 H7.6 a1.7 1.7 0 0 1 1.3 0.6 L10.2 3.6 a1.7 1.7 0 0 0 1.3 0.6 H18.8 a1.7 1.7 0 0 1 1.7 1.7 V15 a1.7 1.7 0 0 1 -1.7 1.7 H3.2 A1.7 1.7 0 0 1 1.5 15 Z"/><path d="M1.5 6.8 H20.5"/></g></svg>
<div class="t" style="left:949.8px;top:226.77px;font-size:20px;letter-spacing:0.435px">Borehole Log</div>
<svg class="abs" style="left:906.5px;top:270.0px" width="9" height="13" viewBox="0 0 9 13"><path d="M2.1 1.9 L6.7 6.5 L2.1 11.1" fill="none" stroke="#18181b" stroke-width="1.5" stroke-linecap="round" stroke-linejoin="round"/></svg>
<svg class="abs" style="left:922px;top:267.1px" width="22" height="18" viewBox="0 0 22 18"><g fill="none" stroke="#18181b" stroke-width="1.45" stroke-linejoin="round" stroke-linecap="round"><path d="M1.5 15 V3.2 a1.7 1.7 0 0 1 1.7 -1.7 H7.6 a1.7 1.7 0 0 1 1.3 0.6 L10.2 3.6 a1.7 1.7 0 0 0 1.3 0.6 H18.8 a1.7 1.7 0 0 1 1.7 1.7 V15 a1.7 1.7 0 0 1 -1.7 1.7 H3.2 A1.7 1.7 0 0 1 1.5 15 Z"/><path d="M1.5 6.8 H20.5"/></g></svg>
<div class="t" style="left:949.8px;top:266.87px;font-size:20px;letter-spacing:0.54px">Lab Testing</div>
<svg class="abs" style="left:906.5px;top:310.0px" width="9" height="13" viewBox="0 0 9 13"><path d="M2.1 1.9 L6.7 6.5 L2.1 11.1" fill="none" stroke="#18181b" stroke-width="1.5" stroke-linecap="round" stroke-linejoin="round"/></svg>
<svg class="abs" style="left:922px;top:307.1px" width="22" height="18" viewBox="0 0 22 18"><g fill="none" stroke="#18181b" stroke-width="1.45" stroke-linejoin="round" stroke-linecap="round"><path d="M1.5 15 V3.2 a1.7 1.7 0 0 1 1.7 -1.7 H7.6 a1.7 1.7 0 0 1 1.3 0.6 L10.2 3.6 a1.7 1.7 0 0 0 1.3 0.6 H18.8 a1.7 1.7 0 0 1 1.7 1.7 V15 a1.7 1.7 0 0 1 -1.7 1.7 H3.2 A1.7 1.7 0 0 1 1.5 15 Z"/><path d="M1.5 6.8 H20.5"/></g></svg>
<div class="t" style="left:949.8px;top:306.87px;font-size:20px;letter-spacing:0.56px">Insitu Testing</div>
<div class="abs" style="left:1155px;top:217px;width:198px;height:160px;border-radius:5px;background:#fff;border:1px solid #e0e7ff;box-shadow:0 4px 10px rgba(40,40,80,0.13),0 1px 3px rgba(40,40,80,0.08)"></div>
<svg class="abs" style="left:1171px;top:228px" width="25" height="25" viewBox="0 0 25 25"><g class="ico" stroke-width="1.5"><path d="M2.3 23 L3.6 17.6 L18.2 3 a2.05 2.05 0 0 1 2.9 0 L21.9 3.8 a2.05 2.05 0 0 1 0 2.9 L7.3 21.3 Z"/><path d="M16.4 4.9 L20 8.5"/></g></svg>
<div class="t" style="left:1206.5px;top:233px;font-size:17.5px;letter-spacing:0.37px">Edit borehole</div>
<svg class="abs" style="left:1171px;top:266px" width="25" height="25" viewBox="0 0 25 25"><g class="ico" stroke-width="1.5"><path d="M12.5 16.2 V3.6"/><path d="M7.6 8.4 L12.5 3.4 L17.4 8.4"/><path d="M2.8 17.4 V19.6 a2.2 2.2 0 0 0 2.2 2.2 H20 a2.2 2.2 0 0 0 2.2 -2.2 V17.4"/></g></svg>
<div class="t" style="left:1206.5px;top:270.9px;font-size:17.5px;letter-spacing:0.49px">Upload files</div>
<svg class="abs" style="left:1171px;top:303px" width="25" height="25" viewBox="0 0 25 25"><g class="ico" stroke-width="1.5"><path d="M10.4 5.6 H5 a2.6 2.6 0 0 0 -2.6 2.6 V19.6 a2.6 2.6 0 0 0 2.6 2.6 H16.4 a2.6 2.6 0 0 0 2.6 -2.6 V14.4"/><path d="M7.6 17.4 L8.4 13.6 L19 3 a1.9 1.9 0 0 1 2.7 0 L22 3.3 a1.9 1.9 0 0 1 0 2.7 L11.4 16.6 Z"/><path d="M17.2 4.8 L20.2 7.8"/></g></svg>
<div class="t" style="left:1206.5px;top:308.2px;font-size:17.5px;letter-spacing:0.41px">Edit profile</div>
<svg class="abs" style="left:1171px;top:341px" width="25" height="25" viewBox="0 0 25 25"><g fill="none" stroke="#fa5560" stroke-width="1.5" stroke-linecap="round" stroke-linejoin="round"><path d="M3.8 6.2 H21.2"/><path d="M8.6 6 V3.8 a1.8 1.8 0 0 1 1.8 -1.8 H14.6 a1.8 1.8 0 0 1 1.8 1.8 V6"/><path d="M5.4 6.4 L6.6 21 a2.2 2.2 0 0 0 2.2 2 H16.2 a2.2 2.2 0 0 0 2.2 -2 L19.6 6.4"/><path d="M10.3 10.4 V18.8 M14.7 10.4 V18.8"/></g></svg>
<div class="t" style="left:1206.5px;top:346.2px;font-size:17.5px;letter-spacing:0.41px;color:#fa5560">Delete borehole</div>
<!-- right panel -->
<div class="t" id="lp" style="left:1384.6px;top:143px;font-size:20px;letter-spacing:-0.27px">LAYER PANEL</div>
<svg class="abs" style="left:1386px;top:193px" width="22" height="20" viewBox="0 0 22 20"><path d="M18.6 9.7 H3 M9.2 3.5 L3 9.7 L9.2 15.9" fill="none" stroke="#18181b" stroke-width="1.7" stroke-linecap="round" stroke-linejoin="round"/></svg>
<div class="abs" style="left:1419px;top:183px;width:45px;height:30px;border-radius:15px;border:1px solid #4a4a55"></div>
<svg class="abs" style="left:1429px;top:186px" width="25" height="24" viewBox="0 0 25 24"><g fill="none" stroke="#4a4a55" stroke-width="1.1" stroke-linecap="round"><path d="M12.3 9.6 V21.2"/><circle cx="12.3" cy="8.8" r="1.1"/><path d="M8.9 12.2 a4.6 4.6 0 0 1 0 -7"/><path d="M15.7 12.2 a4.6 4.6 0 0 0 0 -7"/><path d="M5.6 14.6 a8.2 8.2 0 0 1 0 -11.6"/><path d="M19 14.6 a8.2 8.2 0 0 0 0 -11.6"/></g></svg>
<div class="abs" style="left:1484px;top:183px;width:44px;height:30px;border-radius:15px;border:1px solid #4a4a55"></div>
<svg class="abs" style="left:1494px;top:186px" width="25" height="24" viewBox="0 0 25 24"><g fill="none" stroke="#4a4a55" stroke-width="1.1" stroke-linecap="butt"><rect x="3" y="3.6" width="12.6" height="11.2"/><path d="M19.8 3.6 V15.4 M18 3.6 H21.6 M18 15.4 H21.6"/><path d="M3 19.8 H15.6 M3 18 V21.6 M15.6 18 V21.6"/></g></svg>
<svg class="abs" style="left:1549px;top:187px" width="21" height="21" viewBox="0 0 21 21"><defs><clipPath id="gc"><circle cx="10.4" cy="10.4" r="9.4"/></clipPath></defs><circle cx="10.4" cy="10.4" r="9.4" fill="#4334dc"/><g clip-path="url(#gc)" fill="none" stroke="#fff" stroke-width="0.9"><path d="M0 4.6 C4 2.4 7 6.4 11 4.6 S17 2.8 21 4.4"/><path d="M0 8 C4 5.8 7 9.8 11 8 S17 6.2 21 7.8"/><path d="M0 11.6 C4 9.4 7 13.4 11 11.6 S17 9.8 21 11.4"/><path d="M0 15 C4 12.8 7 16.8 11 15 S17 13.2 21 14.8"/><path d="M0 18.2 C4 16 7 20 11 18.2 S17 16.4 21 18"/></g></svg>
<div class="t" id="geo" style="left:1576px;top:190px;font-size:17.5px;letter-spacing:0.5px;color:#432dd7;-webkit-text-stroke:0.25px #432dd7">Geology</div>
<div class="abs" style="left:1548px;top:220.4px;width:97px;height:1.4px;background:#432dd7"></div>
<div class="abs" style="left:1384px;top:243px;width:450px;height:50px;border-radius:9px;border:1px solid #c9c9d3;background:#fff"></div>
<svg class="abs" style="left:1400px;top:255px" width="26" height="26" viewBox="0 0 26 26"><g fill="none" stroke="#111" stroke-width="2" stroke-linecap="round"><circle cx="11.2" cy="11.4" r="7.6"/><path d="M16.8 17 L21.6 21.4"/></g></svg>
<div class="t" id="ph" style="left:1435.4px;top:257px;font-size:20px;letter-spacing:0.43px;color:#9393ab">Search layer...</div>
<svg class="abs" style="left:1388.6px;top:335.8px" width="13" height="9" viewBox="0 0 13 9"><path d="M1.8 2 L6.5 6.7 L11.2 2" fill="none" stroke="#18181b" stroke-width="1.5" stroke-linecap="round" stroke-linejoin="round"/></svg>
<svg class="abs" style="left:1406.6px;top:330px" width="22" height="18" viewBox="0 0 22 18"><g fill="none" stroke="#18181b" stroke-width="1.45" stroke-linejoin="round" stroke-linecap="round"><path d="M1.5 15 V3.2 a1.7 1.7 0 0 1 1.7 -1.7 H7.6 a1.7 1.7 0 0 1 1.3 0.6 L10.2 3.6 a1.7 1.7 0 0 0 1.3 0.6 H18.8 a1.7 1.7 0 0 1 1.7 1.7 V15 a1.7 1.7 0 0 1 -1.7 1.7 H3.2 A1.7 1.7 0 0 1 1.5 15 Z"/><path d="M1.5 6.8 H20.5"/></g></svg>
<div class="t" id="bhs" style="left:1434.7px;top:330px;font-size:20px;font-weight:400;letter-spacing:0.62px;-webkit-text-stroke:0.55px currentColor">Boreholes</div>
<div class="abs" style="left:1794px;top:328px;width:40px;height:25px;border-radius:13px;background:#f8f8f9"></div>
<div class="t" style="left:1794px;width:40px;text-align:center;top:331.8px;font-size:15px">3</div>
<svg class="abs" style="left:1399.2px;top:368.3px" width="24" height="24" viewBox="0 0 24 24"><circle cx="12" cy="12" r="8.6" fill="#fff" stroke="#111" stroke-width="1.8"/><path d="M12 12 V3.4 A8.6 8.6 0 0 0 3.4 12 Z M12 12 V20.6 A8.6 8.6 0 0 0 20.6 12 Z" fill="#111"/><path d="M12 0.8 V23.2 M0.8 12 H23.2" stroke="#111" stroke-width="1.6" fill="none"/></svg>
<div class="t" style="left:1429.8px;top:369.37px;font-size:20px;letter-spacing:0.49px">Test Boreholes</div>
<svg class="abs" style="left:1399.2px;top:408.3px" width="24" height="24" viewBox="0 0 24 24"><circle cx="12" cy="12" r="8.6" fill="#fff" stroke="#111" stroke-width="1.8"/><path d="M12 12 V3.4 A8.6 8.6 0 0 0 3.4 12 Z M12 12 V20.6 A8.6 8.6 0 0 0 20.6 12 Z" fill="#111"/><path d="M12 0.8 V23.2 M0.8 12 H23.2" stroke="#111" stroke-width="1.6" fill="none"/></svg>
<div class="t" style="left:1429.8px;top:409.37px;font-size:20px;letter-spacing:0.45px">Test</div>
<svg class="abs" style="left:1399.2px;top:448.3px" width="24" height="24" viewBox="0 0 24 24"><circle cx="12" cy="12" r="8.6" fill="#fff" stroke="#111" stroke-width="1.8"/><path d="M12 12 V3.4 A8.6 8.6 0 0 0 3.4 12 Z M12 12 V20.6 A8.6 8.6 0 0 0 20.6 12 Z" fill="#111"/><path d="M12 0.8 V23.2 M0.8 12 H23.2" stroke="#111" stroke-width="1.6" fill="none"/></svg>
<div class="t" style="left:1429.8px;top:449.37px;font-size:20px;letter-spacing:0.56px">test</div>
<div class="abs" style="left:1369px;top:488px;width:481px;height:1px;background:#e0e7ff"></div>
<div class="abs" style="left:1850px;top:178px;width:50px;height:59px;background:#eef2ff"></div>
<div class="abs" style="left:1850px;top:177px;width:50px;height:1px;background:#e0e7ff"></div>
<div class="abs" style="left:1850px;top:237px;width:50px;height:1px;background:#e0e7ff"></div>
<div class="abs" style="left:1850px;top:297px;width:50px;height:1px;background:#e0e7ff"></div>
<div class="abs" style="left:1850px;top:357px;width:50px;height:1px;background:#e0e7ff"></div>
<svg class="abs" style="left:1860px;top:132px" width="30" height="28" viewBox="0 0 30 28"><g class="ico" stroke-width="1.7"><path d="M12.9 4.4 a2.4 2.4 0 0 1 4.2 0 L27.4 22 a2.4 2.4 0 0 1 -2.1 3.6 H4.7 A2.4 2.4 0 0 1 2.6 22 Z"/><path d="M15 11.4 V17.6"/><path d="M15 21.2 V21.4"/></g></svg>
<svg class="abs" style="left:1862px;top:194px" width="26" height="26" viewBox="0 0 26 26"><g fill="none" stroke="#615fff" stroke-width="1.8" stroke-linejoin="round" stroke-linecap="round"><path d="M13 3.5 L23.3 8.7 L13 13.9 L2.7 8.7 Z"/><path d="M2.7 13.4 L13 18.6 L23.3 13.4"/><path d="M2.7 18 L13 23.2 L23.3 18"/></g></svg>
<svg class="abs" style="left:1863px;top:255px" width="25" height="25" viewBox="0 0 25 25"><g class="ico" stroke-width="1.7"><path d="M12.6 22.4 C8 18.6 4.8 15 4.8 10.8 a7.8 7.8 0 0 1 15.6 0 C20.4 15 17.2 18.6 12.6 22.4 Z"/><circle cx="12.6" cy="11" r="2.9"/></g></svg>
<svg class="abs" style="left:1863px;top:318px" width="26" height="20" viewBox="0 0 26 20"><g class="ico" stroke-width="1.7"><rect x="2.6" y="3.6" width="8.2" height="6" rx="1.3"/><rect x="3.8" y="12.6" width="8" height="4.4" rx="1.3"/><rect x="15.2" y="5" width="8" height="10.4" rx="1.3"/></g></svg>
<div id="bottomline" class="abs"></div>
</body>
</html>
